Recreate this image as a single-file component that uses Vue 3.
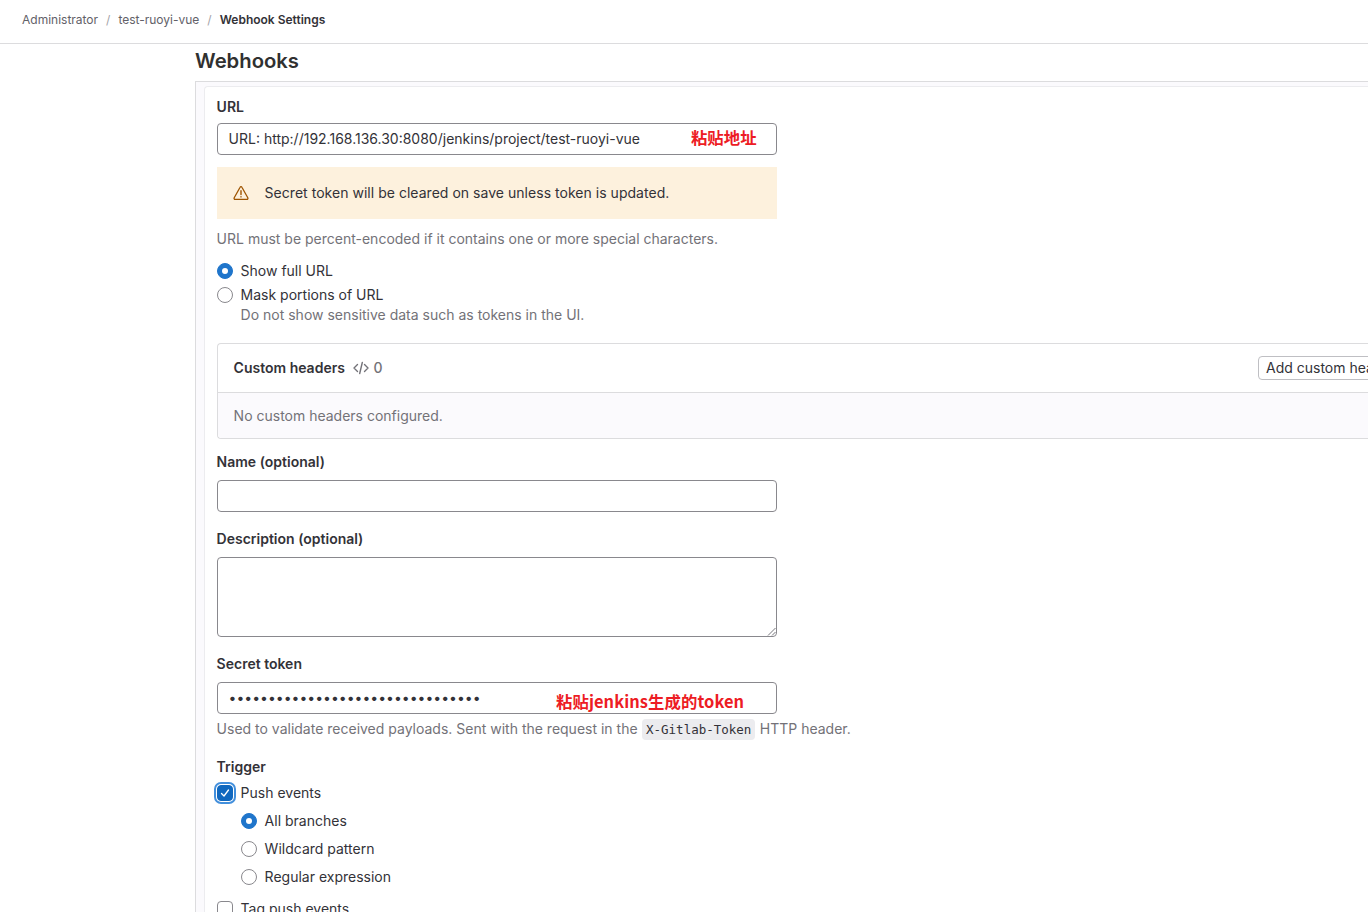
<script setup>
const branchOptions = [
  { label: 'All branches', checked: true },
  { label: 'Wildcard pattern', checked: false },
  { label: 'Regular expression', checked: false },
]
</script>

<template>
  <div class="page">
    <nav class="crumbs">
      <span class="crumb">Administrator</span>
      <span class="sep">/</span>
      <span class="crumb">test-ruoyi-vue</span>
      <span class="sep">/</span>
      <span class="crumb current">Webhook Settings</span>
    </nav>

    <main class="main">
      <h1 class="title">Webhooks</h1>
      <div class="panel">
        <form class="card" @submit.prevent>
          <label class="label url-label">URL</label>
          <div class="field-wrap">
            <div class="input">URL: http://192.168.136.30:8080/jenkins/project/test-ruoyi-vue</div>
            <span class="note note-url">粘贴地址</span>
          </div>

          <div class="alert">
            <svg class="alert-icon" width="16" height="16" viewBox="0 0 16 16" fill="none" stroke="#9e5400" stroke-linecap="round" stroke-linejoin="round">
              <path stroke-width="1.300" d="M7.100 2.300 1.200 12.700c-.4.800.1 1.700 1 1.700h11.600c.9 0 1.400-.9 1-1.700L8.900 2.300c-.4-.8-1.400-.8-1.800 0Z"/>
              <path stroke-width="1.400" d="M8 5.800v3.700M8 11.800v.1"/>
            </svg>
            <span class="alert-text">Secret token will be cleared on save unless token is updated.</span>
          </div>

          <p class="help url-help">URL must be percent-encoded if it contains one or more special characters.</p>

          <div class="option opt-show"><span class="radio checked"></span><span>Show full URL</span></div>
          <div class="option opt-mask"><span class="radio"></span><span>Mask portions of URL</span></div>
          <p class="help mask-help">Do not show sensitive data such as tokens in the UI.</p>

          <section class="headers">
            <div class="headers-top">
              <strong class="headers-title">Custom headers</strong>
              <svg class="code-icon" width="16" height="16" viewBox="0 0 16 16" fill="none" stroke="#737278" stroke-width="1.400" stroke-linecap="round" stroke-linejoin="round">
                <path d="M4.500 4.500 1 8l3.500 3.500M11.500 4.500 15 8l-3.500 3.500M9.300 2.500 6.700 13.500"/>
              </svg>
              <span class="count">0</span>
              <button class="add-btn" type="button">Add custom header</button>
            </div>
            <div class="headers-body">No custom headers configured.</div>
          </section>

          <label class="label name-label">Name (optional)</label>
          <div class="input empty"></div>

          <label class="label desc-label">Description (optional)</label>
          <div class="textarea">
            <svg class="grip" width="9" height="9" viewBox="0 0 9 9" stroke="#77767c" stroke-width="1">
              <path d="M1 8.500 8.500 1M5 8.500 8.500 5"/>
            </svg>
          </div>

          <label class="label token-label">Secret token</label>
          <div class="field-wrap">
            <div class="input dots">••••••••••••••••••••••••••••••••</div>
            <span class="note note-token">粘贴jenkins生成的token</span>
          </div>
          <p class="help token-help">Used to validate received payloads. Sent with the request in the <code class="code">X-Gitlab-Token</code> HTTP header.</p>

          <label class="label trigger-label">Trigger</label>
          <div class="option opt-push">
            <span class="check checked">
              <svg width="12" height="12" viewBox="0 0 12 12" fill="none" stroke="#fff" stroke-width="1.300" stroke-linecap="round" stroke-linejoin="round"><path d="M2.500 6.500 5 9l4.500-6"/></svg>
            </span>
            <span>Push events</span>
          </div>
          <div class="branches">
            <div v-for="o in branchOptions" :key="o.label" class="option branch">
              <span class="radio" :class="{ checked: o.checked }"></span><span>{{ o.label }}</span>
            </div>
          </div>
          <div class="option opt-tag"><span class="check"></span><span>Tag push events</span></div>
        </form>
      </div>
    </main>
  </div>
</template>

<style>
html, body { margin: 0; overflow: hidden; background: #fff; }
</style>

<style scoped>
.page {
  width: 1368px;
  height: 912px;
  overflow: hidden;
  font-family: Inter, "Noto Sans CJK SC", sans-serif;
  font-size: 14px;
  line-height: 20px;
  color: #333238;
  background: #fff;
}
.crumbs {
  box-sizing: border-box;
  height: 44px;
  border-bottom: 1px solid #dcdcde;
  display: flex;
  align-items: center;
  padding-left: 22px;
  padding-bottom: 4px;
  font-size: 12px;
  color: #626168;
}
.sep { color: #a4a3a8; margin: 0 8px; }
.current { color: #333238; font-weight: 600; }
.main { margin-left: 195px; width: 1400px; }
.title {
  margin: 0;
  height: 37px;
  font-size: 20.250px;
  line-height: 34px;
  font-weight: 600;
  color: #303030;
}
.panel {
  border: 1px solid #dcdcde;
  border-right: 0;
  background: #fbfafd;
  padding: 4px 0 0 8px;
}
.card {
  display: block;
  background: #fff;
  border: 1px solid #ececef;
  border-right: 0;
  border-radius: 4px 0 0 0;
  padding: 0 0 0 11.600px;
  height: 1000px;
}
.label { display: block; font-weight: 600; color: #333238; }
.url-label { padding-top: 10px; margin-bottom: 6px; }
.field-wrap { position: relative; width: 560px; }
.input {
  box-sizing: border-box;
  width: 560px;
  height: 32px;
  border: 1px solid #89888d;
  border-radius: 4px;
  padding: 5px 11px;
  color: #333238;
  background: #fff;
}
.dots { letter-spacing: 0px; }
.note {
  position: absolute;
  font-family: "Noto Sans CJK SC", sans-serif;
  font-weight: 700;
  font-size: 16.400px;
  line-height: 22px;
  color: #ed1c24;
  white-space: nowrap;
}
.note-url { left: 474.400px; top: 3px; }
.note-token { left: 339.400px; top: 8px; letter-spacing: 0.080px; }
.alert {
  box-sizing: border-box;
  width: 560px;
  height: 52px;
  margin-top: 12px;
  background: #fdf1dd;
  display: flex;
  align-items: center;
  padding-left: 16px;
  gap: 16px;
  color: #333238;
}
.alert-text { letter-spacing: 0.03px; }
.help { margin: 0; color: #737278; }
.url-help { margin-top: 10px; }
.option { display: flex; align-items: center; gap: 8px; color: #333238; }
.opt-show { margin-top: 12px; }
.opt-mask { margin-top: 4px; }
.mask-help { padding-left: 24px; }
.radio, .check {
  box-sizing: border-box;
  flex: none;
  width: 16px;
  height: 16px;
  border: 1px solid #89888d;
  background: #fff;
  display: flex;
  align-items: center;
  justify-content: center;
}
.radio { border-radius: 50%; }
.radio.checked { background: #1f75cb; border-color: #1f75cb; }
.radio.checked::after {
  content: "";
  width: 6px;
  height: 6px;
  border-radius: 50%;
  background: #fff;
}
.check { border-radius: 4px; }
.check.checked {
  background: #1068bf;
  border-color: #1068bf;
  box-shadow: 0 0 0 1px #fff, 0 0 0 3px #428fdc;
}
.headers {
  margin-top: 18px;
  width: 1400px;
  border: 1px solid #dcdcde;
  border-right: 0;
  border-radius: 4px 0 0 4px;
  background: #fff;
}
.headers-top {
  height: 48px;
  display: flex;
  align-items: center;
  padding-left: 16px;
  border-bottom: 1px solid #dcdcde;
}
.headers-title { font-weight: 600; color: #333238; }
.code-icon { margin-left: 8px; }
.count { margin-left: 4.500px; color: #737278; font-weight: 500; }
.add-btn {
  margin-left: 875.500px;
  height: 24px;
  padding: 0 7px;
  border: 1px solid #bfbfc3;
  border-radius: 4px;
  background: #fff;
  font: inherit;
  color: #333238;
  white-space: nowrap;
}
.headers-body {
  height: 45px;
  padding-left: 16px;
  display: flex;
  align-items: center;
  background: #fbfafd;
  color: #737278;
  border-radius: 0 0 0 4px;
}
.name-label { margin-top: 13px; margin-bottom: 8px; }
.desc-label { margin-top: 17px; margin-bottom: 8px; }
.textarea {
  position: relative;
  box-sizing: border-box;
  width: 560px;
  height: 80px;
  border: 1px solid #89888d;
  border-radius: 4px;
  background: #fff;
}
.grip { position: absolute; right: 0; bottom: 0; }
.token-label { margin-top: 17px; margin-bottom: 8px; }
.token-help { margin-top: 5px; white-space: nowrap; }
.code {
  font-family: "DejaVu Sans Mono", "Liberation Mono", monospace;
  font-size: 12.500px;
  background: #ececef;
  color: #333238;
  border-radius: 4px;
  padding: 3px 4px;
  margin: 0 0.500px;
}
.trigger-label { margin-top: 17px; margin-bottom: 6px; }
.branches { margin-top: 8px; padding-left: 24px; display: flex; flex-direction: column; gap: 8px; }
.opt-tag { margin-top: 12px; }
</style>
